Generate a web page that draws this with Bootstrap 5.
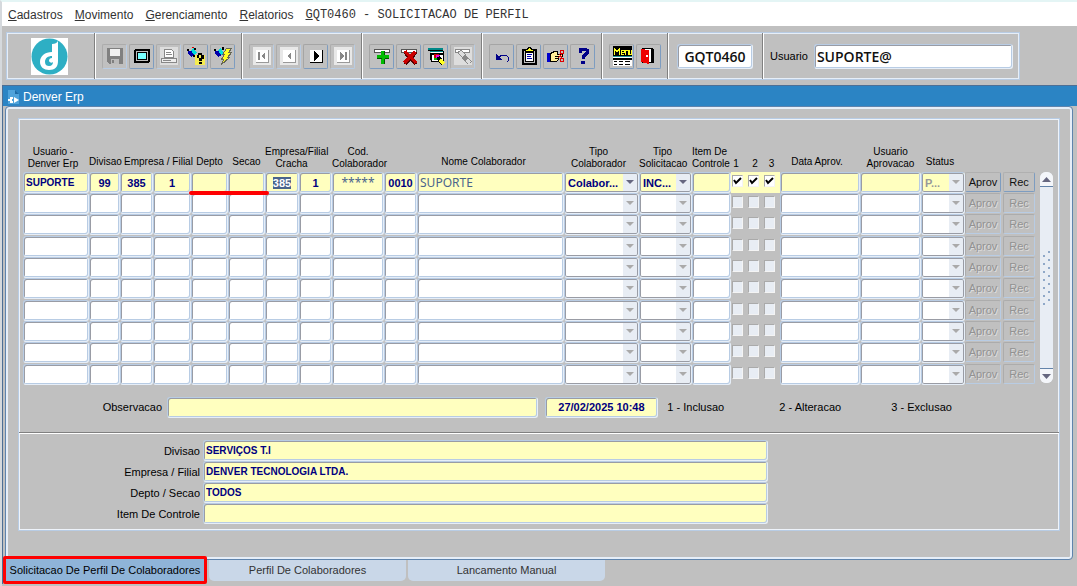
<!DOCTYPE html>
<html lang="pt-BR">
<head>
<meta charset="utf-8">
<meta name="viewport" content="width=device-width, initial-scale=1">
<title>Denver Erp - GQT0460</title>
<link rel="stylesheet" href="https://cdn.jsdelivr.net/npm/bootstrap@5.3.0/dist/css/bootstrap.min.css">
<style>
:root{--face:#c0c0c0;--edge:#b8cce4;--glow:#e6eef8;--shade:#999ca5;--navy:#000080;--fill:#ffffbf}
body{font-family:"Liberation Sans",Arial,sans-serif;font-size:11px;line-height:12px;color:#000;background:var(--face);min-height:100vh;border-top:2px solid #e4f5f5;border-left:2px solid #d5d9dd}
button,input,select{font-family:inherit}
.menubar{height:24px;background:#fff;font-size:12px;gap:12px;padding:2px 6px 0}
.menubar a{color:#333;text-decoration:none}
.menubar a::first-letter{text-decoration:underline}
.menubar .program{font-family:"Liberation Mono","Courier New",monospace}
.toolbox{margin:6px 57px 5px 4px;height:48px;border:1px solid var(--edge);box-shadow:inset 1px 1px var(--glow),inset -1px -1px var(--glow)}
.toolset{gap:2px;padding:0 6px 0 7px;border-left:1px solid #808080;box-shadow:inset 1px 0 #fff}
.toolset.first{border:0;box-shadow:none;width:87px;padding-right:9px}
.toolset.wide{padding:0 9px}
.tool{width:25px;height:25px;padding:0;background:transparent;border:1px solid;border-color:#a5a5a5 #7d9cc0 #7d9cc0 #a5a5a5;border-radius:2px}
.tool:disabled{border-color:#acacac var(--edge) var(--edge) #acacac}
.tool svg{display:block;margin:1px auto;width:20px;height:20px;shape-rendering:crispEdges}
.field{display:block;width:100%;height:21px;min-width:0;padding:0 2px;margin:0;color:var(--navy);font-weight:700;font-size:11px;background:#fff;border:1px solid;border-color:var(--edge) var(--glow) var(--glow) var(--edge);border-radius:3px;box-shadow:inset 1px 1px var(--shade),inset -1px -1px var(--edge);outline:0}
.field.num{text-align:center}
.field.caps{font-size:10px}
.field.fill,.current .field{background-color:var(--fill)}
.field.top{height:25px;font:600 14px "Open Sans","Noto Sans",sans-serif;color:#111}
.field.prog{width:76px}
.current .nome{font-family:"Noto Sans",sans-serif;font-size:12px;font-weight:400;color:#4a648c}
.pick{appearance:none;padding:0 16px 0 3px;opacity:1;box-shadow:inset 0 0 0 1px var(--shade);background:url("data:image/svg+xml,%3Csvg xmlns='http://www.w3.org/2000/svg' width='14' height='21'%3E%3Cpath fill='%23e8edf4' d='M0 0h14v21H0z'/%3E%3Cpath fill='%23aaa' d='M3 8h8l-4 4z'/%3E%3C/svg%3E") right 1px center no-repeat #fff}
.current .pick:enabled{background-image:url("data:image/svg+xml,%3Csvg xmlns='http://www.w3.org/2000/svg' width='14' height='21'%3E%3Cpath fill='%23e8edf4' d='M0 0h14v21H0z'/%3E%3Cpath fill='%23666780' d='M3 8h8l-4 4z'/%3E%3C/svg%3E")}
.pick:disabled{color:#999}
.tick{appearance:none;display:block;width:11px;height:12px;margin:3px 0 0 1px;background:#e8edf4;border:1px solid;border-color:#aaa #f4f4f4 #f4f4f4 #aaa}
.tick:checked{background:url("data:image/svg+xml,%3Csvg xmlns='http://www.w3.org/2000/svg' viewBox='0 0 9 10'%3E%3Cpath d='M1 4l2 3 5-5' fill='none' stroke='%23000' stroke-width='2'/%3E%3C/svg%3E") #fff}
.mini{display:block;width:36px;height:20px;padding:0;font-size:11px;line-height:18px;color:#111;background:transparent;border:1px solid;border-color:#b0b0b0 #7d9cc0 #7d9cc0 #b0b0b0;border-radius:2px}
.mini:disabled{color:#929292;text-shadow:1px 1px #ddd;border-color:#acacac var(--edge) var(--edge) #acacac}
.mini.slim{width:32px}
.caption{height:21px;background:#2b84c4;border-top:1px solid #4d6f95;color:#fff;font-size:12px;padding:2px 0 0 5px;gap:4px}
.window{border-left:1px solid #4d6f95}
.pane{margin:0 4px 0 2px;border:1px solid #5f84ad;border-radius:4px 4px 4px 0;box-shadow:inset 0 0 0 2px var(--glow);padding:11px 12px 28px}
.group{border:1px solid var(--edge);box-shadow:inset 1px 1px #eef3fa,inset -1px -1px #eef3fa}
.gridarea{padding:0 6px 0 4px}
.sheet{table-layout:fixed;border-collapse:collapse;width:100%}
.sheet th,.sheet td{padding:0}
.sheet thead tr{height:53px}
.sheet th{font-size:10px;font-weight:400;text-align:center;vertical-align:bottom;padding-bottom:4px;white-space:nowrap}
.sheet th.two{padding-bottom:2px}
.sheet th.lean{padding-right:14px}
.sheet th.lean-s{padding-right:6px}
.sheet td{height:21px;vertical-align:top}
.sheet tbody tr:nth-child(3n) td{height:22px}
.current .box{background:var(--fill)}
.marker{left:-2px;top:19px;width:80px;height:4px;background:#f00;border-radius:2px}
.sel{color:#fff;background:#4a648c}
.bar{width:13px;height:211px;margin:53px 0 0 5px;background:#e8edf4;border-radius:6px}
.bar button{height:15px;padding:0;background:#f4f6fa;border:0;border-bottom:1px solid #6484aa;border-radius:6px 6px 0 0;line-height:0}
.bar button:last-child{border-bottom:0;border-top:1px solid #6484aa;border-radius:0 0 6px 6px}
.grip{width:10px;height:54px;margin-left:2px;background:linear-gradient(#a9bbd2,#a9bbd2) 0 4px/5px 8px}
.grip{background:radial-gradient(circle at 2px 5px,#8fa8c8 1px,transparent 1px) 0 0/10px 8px,radial-gradient(circle at 7px 1px,#8fa8c8 1px,transparent 1px) 0 0/10px 8px}
.note{height:47px;padding:0 0 3px 5px}
.note label{width:138px;text-align:right;margin-right:5px}
.note .obs{width:35.8%}
.note .when{width:11%;margin:0 9px 0 7px}
.note .legend-item{width:112px}
.details{border-top:1px solid #808080;box-shadow:inset 0 1px #fff;padding:7px 0 6px;display:grid;grid-template-columns:181px 54.3%;column-gap:3px;align-items:center}
.details label{text-align:right}
.tabs{gap:2px}
.tab{width:197px;height:21px;font-size:11px;border:0;padding:0 0 2px;background:#c9d7e8;color:#333;border-radius:0 0 5px 5px}
.tab.active{position:relative;width:204px;height:28px;margin-top:-4px;padding:0;background:#8fb4d8;color:#000;border:3px solid #f00;border-radius:2px;white-space:nowrap}
</style>
</head>
<body>
<nav class="menubar d-flex align-items-center">
  <a href="#" class="d-inline-block">Cadastros</a><a href="#" class="d-inline-block">Movimento</a><a href="#" class="d-inline-block">Gerenciamento</a><a href="#" class="d-inline-block">Relatorios</a><a href="#" class="program d-inline-block">GQT0460 - SOLICITACAO DE PERFIL</a>
</nav>

<div class="toolbox d-flex align-items-stretch">
  <div class="toolset first d-flex align-items-center justify-content-center">
    <svg width="37" height="37" viewBox="0 0 37 37" aria-label="Denver"><path fill="#fff" d="M0 0h37v37H0z"/><circle cx="18.5" cy="18.5" r="18" fill="#2eafc4"/><path fill="#fff" d="M21 6c3 0 5-1 6-3v20c0 6-3 9-9 9-5 0-9-3-9-8 0-6 5-10 12-10z"/><path fill="#2eafc4" d="M21 18c-4 0-7 2-7 6 0 3 2 4 4 4 3 0 4-2 4-4-1 1-3 1-4-1 0-2 1-3 3-3z"/></svg>
  </div>
  <div class="toolset d-flex align-items-center">
    <button class="tool" disabled aria-label="Salvar"><svg viewBox="0 0 20 20"><path fill="#808080" d="M2 2h16v16H4l-2-2z"/><path fill="#f0f0f0" d="M5 3h10v7H5z"/><path fill="#bbb" d="M6 13h8v5H6z"/><path fill="#808080" d="M7 14h2v3H7z"/></svg></button>
    <button class="tool" aria-label="Tela"><svg viewBox="0 0 20 20"><rect x="3" y="4" width="14" height="12" rx="1" fill="#c0c0c0" stroke="#000" stroke-width="2"/><path fill="#7ff" stroke="#000" d="M5.500 6.500h9v7h-9z"/></svg></button>
    <button class="tool" disabled aria-label="Imprimir"><svg viewBox="0 0 20 20"><path fill="#ddd" d="M1 1h18v18H1z"/><path fill="#fff" stroke="#888" d="M5.500 3.500h7l2 2v6h-9z"/><path stroke="#888" d="M7 6.500h5M7 8.500h6"/><path fill="#eee" stroke="#888" d="M2.500 12.500h15v4h-15z"/><path stroke="#888" d="M4 14.500h8"/></svg></button>
    <button class="tool" aria-label="Entrar consulta"><svg viewBox="0 0 20 20"><path fill="#f5ec50" d="M9 9h10v10H9z"/><path fill="#00a" d="M2 5h3l4 4-4 2-3-3z"/><path fill="#0dd" d="M5 4l3-2 3 5-3 2z"/><path fill="#d00" d="M6 1h2v1H6z"/><path d="M1 3h2v2H1zM8 2h2v2H8zM7 9h2v2H7zM11 9h2v3h-2zM12 7h4v2h-4zM15 9h3v4h-3zM13 12h3v3h-3zM13 16h3v2h-3z"/></svg></button>
    <button class="tool" aria-label="Executar consulta"><svg viewBox="0 0 20 20"><path fill="#00a" d="M2 5h3l4 4-4 2-3-3z"/><path fill="#0dd" d="M5 4l3-2 3 5-3 2z"/><path d="M1 3h2v2H1zM9 1h2v3H9z"/><path fill="#ff2" stroke="#665" d="M13.500 2.500h5l-3 4h3l-4 5h2l-8 7 2-5h-2l3-5h-2z"/></svg></button>
  </div>
  <div class="toolset d-flex align-items-center">
    <button class="tool" disabled aria-label="Primeiro"><svg viewBox="0 0 20 20"><path fill="#e8e8e8" d="M1 1h18v18H1z"/><path fill="#fff" d="M4 4h12v12H4z"/><path fill="none" stroke="#999" d="M4 16.500h12.500V4"/><path fill="#888" d="M6 6h2v8H6zM13 6v8l-4-4z"/></svg></button>
    <button class="tool" disabled aria-label="Anterior"><svg viewBox="0 0 20 20"><path fill="#e8e8e8" d="M1 1h18v18H1z"/><path fill="#fff" d="M4 4h12v12H4z"/><path fill="none" stroke="#999" d="M4 16.500h12.500V4"/><path fill="#888" d="M12 6v8l-4-4z"/></svg></button>
    <button class="tool" aria-label="Proximo"><svg viewBox="0 0 20 20"><path fill="#fff" d="M4 4h12v12H4z"/><path fill="none" stroke="#000" d="M4 16.500h12.500V4"/><path d="M8 5v10l5-5z"/></svg></button>
    <button class="tool" disabled aria-label="Ultimo"><svg viewBox="0 0 20 20"><path fill="#e8e8e8" d="M1 1h18v18H1z"/><path fill="#fff" d="M4 4h12v12H4z"/><path fill="none" stroke="#999" d="M4 16.500h12.500V4"/><path fill="#888" d="M7 6v8l4-4zM12 6h2v8h-2z"/></svg></button>
  </div>
  <div class="toolset d-flex align-items-center">
    <button class="tool" aria-label="Inserir"><svg viewBox="0 0 20 20"><path fill="#fff" stroke="#555" d="M2.500 3.500h15v3h-15z"/><path fill="#0b0" d="M9 5h4v4h4v4h-4v5H9v-5H5V9h4z"/><path fill="none" stroke="#050" d="M12.500 5v4M5 12.500h4.500M13 12.500h4M12.500 13v5"/></svg></button>
    <button class="tool" aria-label="Excluir"><svg viewBox="0 0 20 20"><path fill="#fff" stroke="#555" d="M2.500 3.500h15v3h-15z"/><path stroke="#500" stroke-width="4" d="M6 6l11 12M17 6L6 18"/><path stroke="#c00" stroke-width="3" d="M6 5l11 12M16 6L5 17"/></svg></button>
    <button class="tool" aria-label="Limpar"><svg viewBox="0 0 20 20"><path fill="#fff" stroke="#000" stroke-width="1" d="M5.500 5.500h12v10h-12z"/><path fill="#088" d="M2 2h15v2H2zM4 5h13v1H4z"/><path d="M2 4h15v1H2zM4 7h13v2H4zM4 7h2v7H4z"/><path fill="#fff" d="M5 6h12v1H5z"/><path fill="#c00" d="M8 8h5v5H8z"/><path fill="#e0e" d="M10 9h4v4h-4z"/><path fill="#0b0" d="M8 12h3v2H8z"/><path stroke="#000" stroke-width="4" d="M12 11l5 7"/><path stroke="#ff2" stroke-width="3" d="M14 14l4 4"/></svg></button>
    <button class="tool" disabled aria-label="Apagar"><svg viewBox="0 0 20 20"><path fill="#ddd" d="M1 1h18v18H1z"/><path fill="#fff" stroke="#888" d="M2.500 3.500h14v3h-14z"/><path stroke="#888" stroke-width="5" d="M6 5l11 12"/><path stroke="#ddd" stroke-width="3" d="M7 6l4 4M14 14l3 3"/></svg></button>
  </div>
  <div class="toolset d-flex align-items-center">
    <button class="tool" aria-label="Desfazer"><svg viewBox="0 0 20 20"><path fill="none" stroke="#008" d="M6 12l4-3h4l2 2 1 3-2 2"/><path fill="#008" d="M4 8v6h6z"/></svg></button>
    <button class="tool" aria-label="Lista"><svg viewBox="0 0 20 20"><rect x="4" y="4" width="13" height="14" fill="#c0c0c0" stroke="#000" stroke-width="2"/><path fill="#fff" stroke="#000" d="M6.500 6.500h8v9h-8z"/><path stroke="#00a" d="M8 8.500h5M8 10.500h4M8 12.500h5"/><path fill="#ff2" stroke="#000" d="M6.500 3.500h2l1-2h2l1 2h2v2h-8z"/></svg></button>
    <button class="tool" aria-label="Recortar"><svg viewBox="0 0 20 20"><path fill="#00c" d="M1 7h3v9H1z"/><path fill="#fe9" stroke="#000" d="M4.500 7.500l4-2h3v3h5v2h-4v3l-2 2h-6z"/><path stroke="#000" d="M9 10.500h4M9 12.500h3"/><path fill="none" stroke="#d00" d="M14.500 4.500h3v3h-3zM14.500 12.500h3v3h-3zM12 12l4-4M13 8l4 5"/></svg></button>
    <button class="tool" aria-label="Ajuda"><svg viewBox="0 0 20 20"><path fill="none" stroke="#008" stroke-width="3" d="M7 7V4l1-1h4l2 1v3l-4 4v2"/><path fill="#008" d="M8 15h4v3H8z"/></svg></button>
  </div>
  <div class="toolset d-flex align-items-center">
    <button class="tool" aria-label="Menu"><svg viewBox="0 0 20 20"><path d="M1 0h19v10H1z"/><path fill="none" stroke="#ff2" d="M2.500 9V2M3 3l2 3 2-3M7.500 9V2M9 6.500h3M9.500 9V4.500h2.500V7M9 8.500h3M13.500 9V4.500h2.500V9M17.500 4v4.500h2V4"/><path fill="#fff" d="M1 10h19v10H1z"/><path fill="#299" d="M1 10h19v1H1z"/><path d="M1 12h19v2H1zM2 15h3v1H2zM7 15h4v1H7zM13 15h5v1h-5zM2 18h3v1H2zM7 18h4v1H7zM13 18h5v1h-5z"/></svg></button>
    <button class="tool" aria-label="Sair"><svg viewBox="0 0 20 20"><path fill="#fff" stroke="#000" d="M3.500 2.500h10v14h-10z"/><path d="M12 3h3v14h-3z"/><path fill="#fff" d="M10 4h2v12h-2z"/><path fill="#e00" d="M2 3l8 1v14l-8-2z"/><path d="M7 9h2v2H7z" fill="#fff"/></svg></button>
  </div>
  <div class="toolset wide d-flex align-items-center"><input class="field top num prog" value="GQT0460" aria-label="Programa"></div>
  <div class="toolset d-flex align-items-center flex-fill"><label for="usr" class="me-1">Usuario</label><input id="usr" class="field top flex-fill" value="SUPORTE@"></div>
</div>

<main class="window">
  <div class="caption d-flex align-items-center">
    <svg width="11" height="14" viewBox="0 0 11 14"><path fill="#4fa3db" d="M0 0h7l4 4v10H0z"/><path fill="#1e6ba6" d="M7 0v4h4z"/><path fill="none" stroke="#fff" stroke-width="2" d="M5 8H3v4h2M0 10h3"/><path fill="#fff" d="M6 7l5 3-5 3z"/></svg>
    <span>Denver Erp</span>
  </div>
  <div class="pane">
    <div class="group">
      <div class="gridarea d-flex">
        <table class="sheet">
          <colgroup><col style="width:66px"><col style="width:31px"><col style="width:33px"><col style="width:38px"><col style="width:37px"><col style="width:37px"><col style="width:34px"><col style="width:33px"><col style="width:52px"><col style="width:33px"><col><col style="width:75px"><col style="width:53px"><col style="width:39px"><col style="width:16px"><col style="width:16px"><col style="width:17px"><col style="width:80px"><col style="width:61px"><col style="width:44px"><col style="width:38px"><col style="width:32px"></colgroup>
          <thead><tr>
            <th class="two lean-s">Usuario -<br>Denver Erp</th><th>Divisao</th><th colspan="2" class="ps-1">Empresa / Filial</th><th>Depto</th><th>Secao</th><th colspan="2" class="two lean">Empresa/Filial<br>Cracha</th><th class="two">Cod.<br>Colaborador</th><th></th><th class="lean">Nome Colaborador</th><th class="two lean-s">Tipo<br>Colaborador</th><th class="two lean-s">Tipo<br>Solicitacao</th><th class="two lean-s">Item De<br>Controle</th><th class="two lean-s">1</th><th class="two">2</th><th class="two">3</th><th class="lean-s">Data Aprov.</th><th class="two">Usuario<br>Aprovacao</th><th class="lean-s">Status</th><th></th><th></th>
          </tr></thead>
          <tbody id="rows">
            <tr class="current">
              <td><input class="field caps" value="SUPORTE" aria-label="Usuario"></td>
              <td><input class="field num" value="99" aria-label="Divisao"></td>
              <td><input class="field num" value="385" aria-label="Empresa"></td>
              <td><input class="field num" value="1" aria-label="Filial"></td>
              <td class="position-relative"><input class="field" aria-label="Depto"><span class="marker position-absolute z-1"></span></td>
              <td><input class="field" aria-label="Secao"></td>
              <td><div class="field num" contenteditable="true" role="textbox" aria-label="Empresa cracha"><span class="sel d-inline-block mt-1">385</span></div></td>
              <td><input class="field num" value="1" aria-label="Filial cracha"></td>
              <td><input class="field num nome" value="*****" aria-label="Cod. Colaborador"></td>
              <td><input class="field num" value="0010" aria-label="Codigo"></td>
              <td><input class="field nome" value="SUPORTE" aria-label="Nome Colaborador"></td>
              <td><select class="field pick" aria-label="Tipo Colaborador"><option>Colabor...</option></select></td>
              <td><select class="field pick" aria-label="Tipo Solicitacao"><option>INC...</option></select></td>
              <td><input class="field" aria-label="Item De Controle"></td>
              <td class="box"><input type="checkbox" class="tick" checked aria-label="1"></td>
              <td class="box"><input type="checkbox" class="tick" checked aria-label="2"></td>
              <td class="box"><input type="checkbox" class="tick" checked aria-label="3"></td>
              <td><input class="field" aria-label="Data Aprov."></td>
              <td><input class="field" aria-label="Usuario Aprovacao"></td>
              <td><select class="field pick" disabled aria-label="Status"><option>P...</option></select></td>
              <td><button class="mini">Aprov</button></td>
              <td><button class="mini slim">Rec</button></td>
            </tr>
          </tbody>
        </table>
        <div class="bar d-flex flex-column justify-content-between flex-shrink-0">
          <button aria-label="Acima"><svg width="9" height="5"><path fill="#666780" d="M0 5h9L4.500 0z"/></svg></button>
          <div class="grip"></div>
          <button aria-label="Abaixo"><svg width="9" height="5"><path fill="#666780" d="M0 0h9L4.500 5z"/></svg></button>
        </div>
      </div>
      <div class="note d-flex align-items-center">
        <label for="obs">Observacao</label><input id="obs" class="field fill obs">
        <input class="field fill num when" value="27/02/2025 10:48" aria-label="Data">
        <span class="legend-item">1 - Inclusao</span><span class="legend-item">2 - Alteracao</span><span class="legend-item">3 - Exclusao</span>
      </div>
      <div class="details">
        <label for="d1">Divisao</label><input id="d1" class="field fill caps" value="SERVIÇOS T.I">
        <label for="d2">Empresa / Filial</label><input id="d2" class="field fill caps" value="DENVER TECNOLOGIA LTDA.">
        <label for="d3">Depto / Secao</label><input id="d3" class="field fill caps" value="TODOS">
        <label for="d4">Item De Controle</label><input id="d4" class="field fill caps">
      </div>
    </div>
  </div>
  <div class="tabs d-flex">
    <button class="tab active">Solicitacao De Perfil De Colaboradores</button>
    <button class="tab">Perfil De Colaboradores</button>
    <button class="tab">Lancamento Manual</button>
  </div>
</main>
<script src="https://cdn.jsdelivr.net/npm/bootstrap@5.3.0/dist/js/bootstrap.bundle.min.js"></script>
<script>
// Nine empty records below the current one
const text = '<td><input class="field" aria-label="Campo"></td>';
const pick = '<td><select class="field pick" disabled aria-label="Lista"><option></option></select></td>';
const tick = '<td><input type="checkbox" class="tick" disabled aria-label="Opcao"></td>';
const row = '<tr>' + text.repeat(11) + pick.repeat(2) + text + tick.repeat(3) + text.repeat(2) + pick +
  '<td><button class="mini" disabled>Aprov</button></td><td><button class="mini slim" disabled>Rec</button></td></tr>';
document.getElementById('rows').insertAdjacentHTML('beforeend', row.repeat(9));
</script>
</body>
</html>
